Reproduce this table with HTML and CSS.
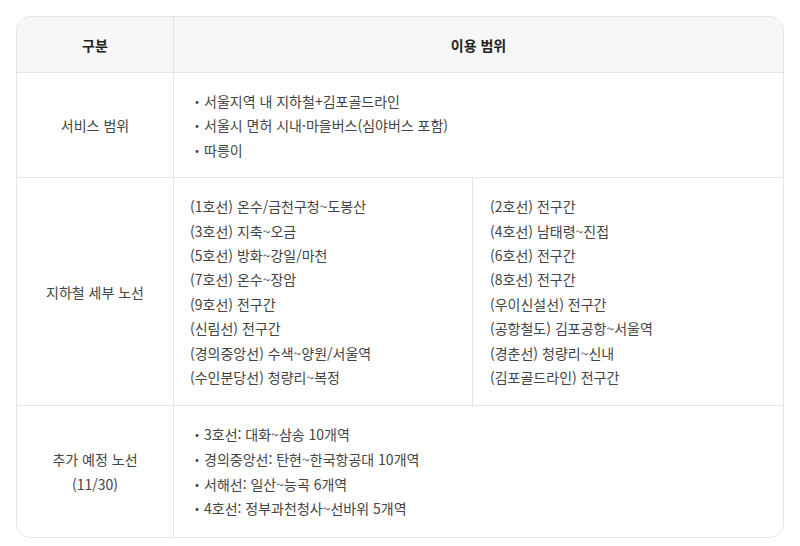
FILE: index.html
```html
<!DOCTYPE html>
<html lang="ko">
<head>
<meta charset="utf-8">
<link rel="stylesheet" href="styles.css">
</head>
<body>
<div class="card">
  <table class="tbl">
    <thead>
      <tr>
        <th class="c1">구분</th>
        <th>이용 범위</th>
      </tr>
    </thead>
    <tbody>
      <tr>
        <td class="c1">서비스 범위</td>
        <td class="content first">
          <ul class="bullets">
            <li>서울지역 내 지하철+김포골드라인</li>
            <li>서울시 면허 시내·마을버스(심야버스 포함)</li>
            <li>따릉이</li>
          </ul>
        </td>
      </tr>
      <tr>
        <td class="c1">지하철 세부 노선</td>
        <td class="split">
          <div class="lines">
            <ul class="plain left">
              <li>(1호선) 온수/금천구청~도봉산</li>
              <li>(3호선) 지축~오금</li>
              <li>(5호선) 방화~강일/마천</li>
              <li>(7호선) 온수~장암</li>
              <li>(9호선) 전구간</li>
              <li>(신림선) 전구간</li>
              <li>(경의중앙선) 수색~양원/서울역</li>
              <li>(수인분당선) 청량리~복정</li>
            </ul>
            <ul class="plain right">
              <li>(2호선) 전구간</li>
              <li>(4호선) 남태령~진접</li>
              <li>(6호선) 전구간</li>
              <li>(8호선) 전구간</li>
              <li>(우이신설선) 전구간</li>
              <li>(공항철도) 김포공항~서울역</li>
              <li>(경춘선) 청량리~신내</li>
              <li>(김포골드라인) 전구간</li>
            </ul>
          </div>
        </td>
      </tr>
      <tr>
        <td class="c1">추가 예정 노선<br>(11/30)</td>
        <td class="content last">
          <ul class="bullets">
            <li>3호선: 대화~삼송 10개역</li>
            <li>경의중앙선: 탄현~한국항공대 10개역</li>
            <li>서해선: 일산~능곡 6개역</li>
            <li>4호선: 정부과천청사~선바위 5개역</li>
          </ul>
        </td>
      </tr>
    </tbody>
  </table>
</div>
</body>
</html>
```
FILE: styles.css
```css
html, body {
  margin: 0;
  padding: 0;
  background: #ffffff;
}
body {
  padding: 16px;
  font-family: "Noto Sans CJK KR", "Noto Sans", sans-serif;
  font-size: 14px;
  color: #444444;
}
.card {
  border: 1px solid #e4e4e4;
  border-radius: 14px;
  overflow: hidden;
  width: 766px;
}
.tbl {
  width: 100%;
  border-collapse: collapse;
  table-layout: fixed;
}
.tbl th {
  background: #f7f7f7;
  color: #222222;
  font-weight: 700;
  height: 55px;
  padding: 0;
  text-align: center;
  border-bottom: 1px solid #e4e4e4;
}
.tbl td {
  padding: 0;
  line-height: 24.4px;
  border-top: 1px solid #e4e4e4;
  vertical-align: middle;
}
.tbl tbody tr:first-child td {
  border-top: none;
}
.tbl .c1 {
  width: 156px;
  text-align: center;
  border-right: 1px solid #e4e4e4;
}
.content {
  padding: 16px !important;
}
.content.first {
  padding-bottom: 15px !important;
}
.content.last {
  line-height: 24.6px;
}
ul {
  list-style: none;
  margin: 0;
  padding: 0;
}
.bullets li::before {
  content: "・";
}
.lines {
  display: grid;
  grid-template-columns: 299px 1fr;
}
.plain {
  padding: 16px 16px 16px 17px;
}
.plain.left {
  padding-left: 16px;
  border-right: 1px solid #e4e4e4;
}
```
